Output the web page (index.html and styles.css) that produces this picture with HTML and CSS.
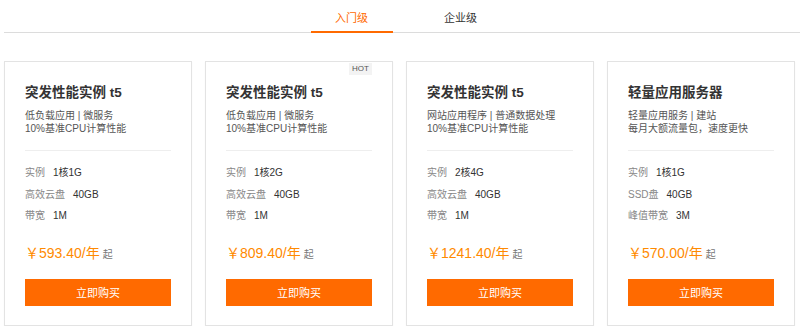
FILE: index.html
```html
<!DOCTYPE html>
<html lang="zh-CN">
<head>
    <meta charset="UTF-8">
    <meta name="viewport" content="width=device-width, initial-scale=1.0">
    <title>云服务器选购</title>
    <link rel="stylesheet" href="styles.css">
</head>
<body>
    <div class="tabs">
        <div class="tab active">入门级</div>
        <div class="tab">企业级</div>
    </div>

    <div class="card-list">
        <div class="card">
            <div class="card-title">突发性能实例 t5</div>
            <div class="card-desc">低负载应用 | 微服务<br>10%基准CPU计算性能</div>
            <div class="card-specs">
                <div class="spec"><span class="spec-label">实例</span><span class="spec-value">1核1G</span></div>
                <div class="spec"><span class="spec-label">高效云盘</span><span class="spec-value">40GB</span></div>
                <div class="spec"><span class="spec-label">带宽</span><span class="spec-value">1M</span></div>
            </div>
            <div class="price">￥593.40/年<span class="price-from">起</span></div>
            <button class="buy-button">立即购买</button>
        </div>

        <div class="card">
            <span class="hot">HOT</span>
            <div class="card-title">突发性能实例 t5</div>
            <div class="card-desc">低负载应用 | 微服务<br>10%基准CPU计算性能</div>
            <div class="card-specs">
                <div class="spec"><span class="spec-label">实例</span><span class="spec-value">1核2G</span></div>
                <div class="spec"><span class="spec-label">高效云盘</span><span class="spec-value">40GB</span></div>
                <div class="spec"><span class="spec-label">带宽</span><span class="spec-value">1M</span></div>
            </div>
            <div class="price">￥809.40/年<span class="price-from">起</span></div>
            <button class="buy-button">立即购买</button>
        </div>

        <div class="card">
            <div class="card-title">突发性能实例 t5</div>
            <div class="card-desc">网站应用程序 | 普通数据处理<br>10%基准CPU计算性能</div>
            <div class="card-specs">
                <div class="spec"><span class="spec-label">实例</span><span class="spec-value">2核4G</span></div>
                <div class="spec"><span class="spec-label">高效云盘</span><span class="spec-value">40GB</span></div>
                <div class="spec"><span class="spec-label">带宽</span><span class="spec-value">1M</span></div>
            </div>
            <div class="price">￥1241.40/年<span class="price-from">起</span></div>
            <button class="buy-button">立即购买</button>
        </div>

        <div class="card">
            <div class="card-title">轻量应用服务器</div>
            <div class="card-desc">轻量应用服务 | 建站<br>每月大额流量包，速度更快</div>
            <div class="card-specs">
                <div class="spec"><span class="spec-label">实例</span><span class="spec-value">1核1G</span></div>
                <div class="spec"><span class="spec-label">SSD盘</span><span class="spec-value">40GB</span></div>
                <div class="spec"><span class="spec-label">峰值带宽</span><span class="spec-value">3M</span></div>
            </div>
            <div class="price">￥570.00/年<span class="price-from">起</span></div>
            <button class="buy-button">立即购买</button>
        </div>
    </div>
</body>
</html>
```

FILE: styles.css
```css
body {
    margin: 0;
    padding: 0 0 0 4px;
    background-color: #fff;
    font-family: "Liberation Sans", "Noto Sans CJK SC", sans-serif;
    color: #333;
}
.tabs {
    display: flex;
    justify-content: center;
    gap: 27px;
    padding-left: 8px;
    border-bottom: 1px solid #dcdcdc;
    height: 32px;
}
.tab {
    width: 82px;
    text-align: center;
    font-size: 11px;
    line-height: 36px;
    height: 31px;
    color: #333;
}
.tab.active {
    color: #ff6a00;
    border-bottom: 2px solid #ff6a00;
}
.card-list {
    display: grid;
    grid-template-columns: repeat(4, 188px);
    column-gap: 13px;
    margin-top: 28px;
}
.card {
    position: relative;
    border: 1px solid #e3e3e3;
    box-shadow: 0 1px 1px rgba(0, 0, 0, 0.06);
    padding: 21px 20px 20px;
    height: 265px;
    box-sizing: border-box;
}
.hot {
    position: absolute;
    top: 1px;
    right: 20px;
    width: 23px;
    height: 12px;
    line-height: 12px;
    text-align: center;
    background-color: #f3f3f3;
    font-size: 8px;
    color: #555;
}
.card-title {
    font-size: 13.5px;
    font-weight: bold;
    line-height: 20px;
    color: #333;
}
.card-desc {
    margin-top: 6px;
    font-size: 10px;
    line-height: 13px;
    color: #555;
    padding-bottom: 15px;
    border-bottom: 1px solid #eee;
}
.card-specs {
    margin-top: 11px;
}
.spec {
    font-size: 10px;
    line-height: 21.5px;
}
.spec-label {
    color: #888;
    margin-right: 8px;
}
.spec-value {
    color: #333;
}
.price {
    margin-top: 16px;
    font-size: 14px;
    line-height: 20px;
    color: #ff8a00;
}
.price-from {
    font-size: 10px;
    color: #777;
    margin-left: 3px;
}
.buy-button {
    display: block;
    width: 100%;
    height: 27px;
    margin-top: 14px;
    border: none;
    background-color: #ff6a00;
    color: #fff;
    font-family: inherit;
    font-size: 11px;
    cursor: pointer;
}
```
